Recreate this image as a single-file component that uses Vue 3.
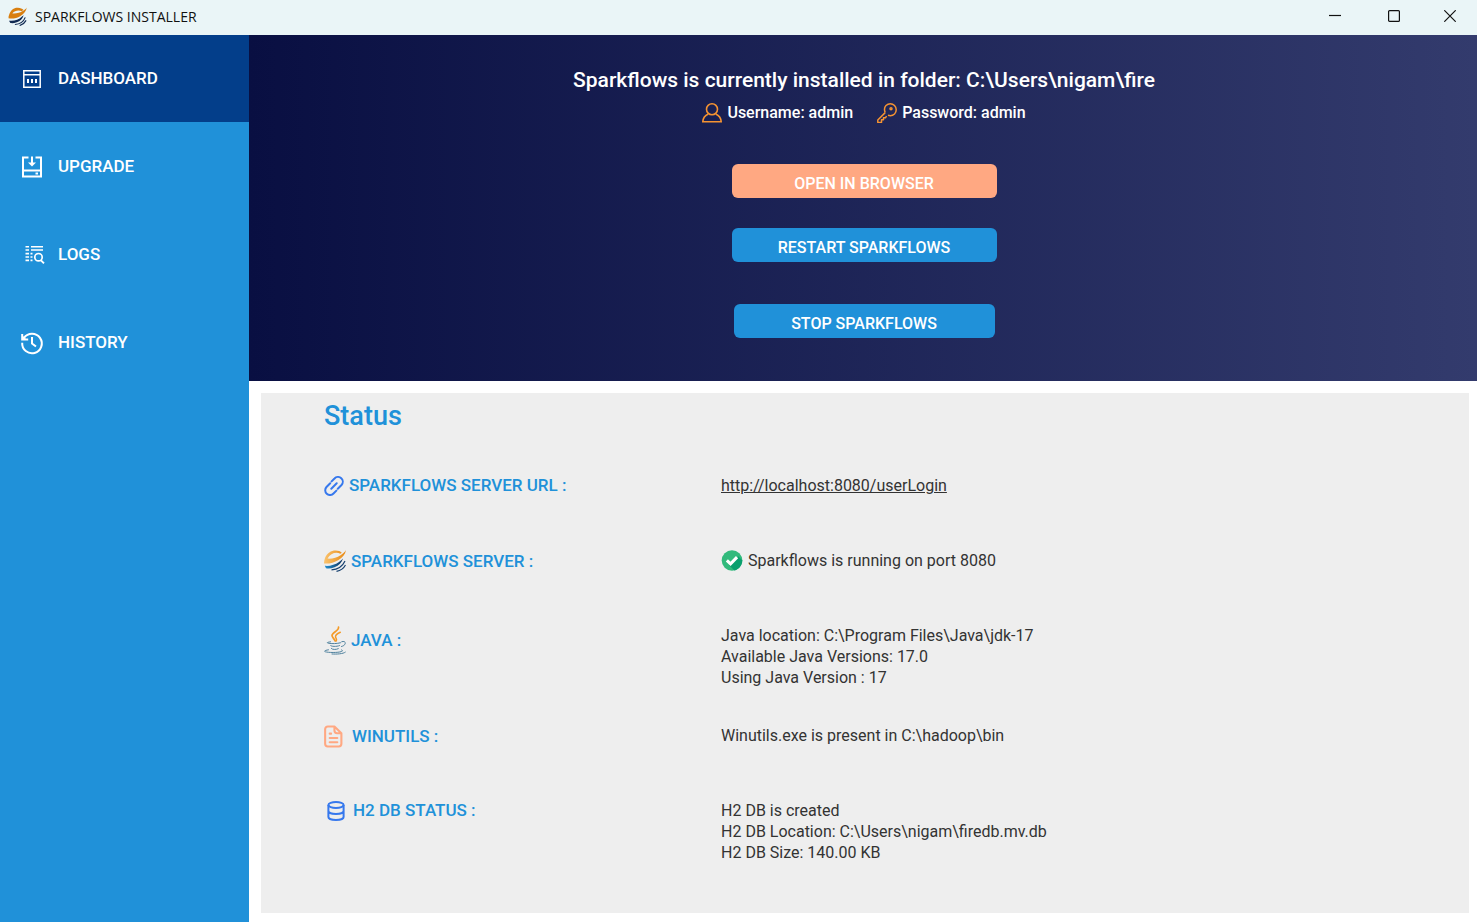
<script setup>
import { ref } from 'vue'

const active = ref('dashboard')
const menu = [
  { id: 'dashboard', label: 'DASHBOARD' },
  { id: 'upgrade', label: 'UPGRADE' },
  { id: 'logs', label: 'LOGS' },
  { id: 'history', label: 'HISTORY' },
]
const java = ['Java location: C:\\Program Files\\Java\\jdk-17', 'Available Java Versions: 17.0', 'Using Java Version : 17']
const db = ['H2 DB is created', 'H2 DB Location: C:\\Users\\nigam\\firedb.mv.db', 'H2 DB Size: 140.00 KB']
</script>

<template>
  <div class="window">
    <header class="titlebar">
      <svg class="app-logo" viewBox="0 0 22 22" aria-hidden="true">
        <path d="M1.500 8.500C3 3.500 7 .5 11.500.8c3 .1 5 1.200 6.300 2.500L16 5C13 3.400 8 3.600 5 7.400c4 .5 9-.7 12.500-3.100C19.500 3.400 20.800 2 21.800.5 21 4.500 18.500 8 14.500 10.300 10 13 5 13.800.6 12.900c-.2-1.400.2-3 .9-4.400z" fill="#d97f10" />
        <path d="M1.200 15.800c5.500.8 11-.8 15-4.800l2-1.500c-1.500 4-4 6.800-8 8.200-3 1-5.500 1.200-7.500.8z" fill="#102a52" />
        <path d="M8 20.300c5-.3 10-3.200 12-8.300M13.500 21.500c3.500-1 6-3.200 7.500-6" fill="none" stroke="#102a52" stroke-width="1.300" />
      </svg>
      <span class="app-name">SPARKFLOWS INSTALLER</span>
      <div class="controls">
        <button type="button" aria-label="Minimize"><svg viewBox="0 0 12 12"><path d="M0 5.500h12" /></svg></button>
        <button type="button" aria-label="Maximize"><svg viewBox="0 0 12 12"><rect x=".6" y=".6" width="10.800" height="10.800" rx="1" /></svg></button>
        <button type="button" aria-label="Close"><svg viewBox="0 0 12 12"><path d="M.3.3l11.400 11.400M11.700.3L.3 11.700" /></svg></button>
      </div>
    </header>

    <div class="body">
      <nav class="sidebar">
        <button
          v-for="item in menu"
          :key="item.id"
          type="button"
          class="nav-item"
          :class="{ active: active === item.id }"
          @click="active = item.id"
        >
          <svg class="nav-icon" viewBox="0 0 22 22" aria-hidden="true">
            <g v-if="item.id === 'dashboard'" fill="none" stroke="#fff" stroke-width="1.500">
              <path d="M2.800 2.800h16.400v16.400H2.800zM2.800 6.800h16.400" />
              <path d="M7 11v4M11 11v4M15 11v4" stroke-width="2" />
            </g>
            <g v-else-if="item.id === 'upgrade'" fill="none" stroke="#fff" stroke-width="2">
              <path d="M7.500 1.500H2v19h18v-19h-5.500M2 14.500h18M11 .5v8" />
              <path d="M7 6.500h8L11 10.500zM14.500 16.500h2.500v2h-2.500z" fill="#fff" stroke="none" />
            </g>
            <g v-else-if="item.id === 'logs'" fill="none" stroke="#fff">
              <path d="M4.500 2.800H8M4.500 6H8M4.500 9.600H8M4.500 13H8M4.500 16.400H8M10 2.800h12M10 6h12" stroke-width="1.600" />
              <path d="M9.500 9.600h2M9.500 13h2M9.500 16.400h2" stroke-width="1.600" />
              <circle cx="17.500" cy="13.200" r="3.700" stroke-width="1.700" />
              <path d="M20 16.300l3 3" stroke-width="1.900" />
            </g>
            <g v-else fill="none" stroke="#fff" stroke-width="2">
              <path d="M1.200 10.800A9.800 9.800 0 1 0 3 5.800M11 5v6.500l4 3" />
              <path d="M1.200 2v5.500h6" />
              <path d="M1 3v5h5z" fill="#fff" stroke="none" />
            </g>
          </svg>
          <span>{{ item.label }}</span>
        </button>
      </nav>

      <main class="main">
        <section class="hero">
          <h1>Sparkflows is currently installed in folder: C:\Users\nigam\fire</h1>
          <div class="credentials">
            <span class="credential">
              <svg viewBox="0 0 20 20" aria-hidden="true"><g fill="none" stroke="#f59332" stroke-width="1.600"><circle cx="10" cy="6.300" r="5.500" /><path d="M6.300 11C3 12.500 1 15.500.8 18.700h18.400C19 15.500 17 12.500 13.700 11" /></g></svg>
              Username: admin
            </span>
            <span class="credential">
              <svg viewBox="0 0 20 20" aria-hidden="true"><g fill="none" stroke="#f59332" stroke-width="1.500" stroke-linejoin="round"><path d="M8.200 9.600L.8 17v2.400h3.700v-2.600h2v-2h2l1-1.800M8.200 9.600C7 6.500 7.300 4.200 9 2.500c2.500-2.300 6.200-2.300 8.500 0s2.300 6 0 8.500c-1.800 1.700-4.300 2-6.500 1.300" /><circle cx="14" cy="5.700" r="1" /></g></svg>
              Password: admin
            </span>
          </div>
          <div class="actions">
            <button type="button" class="action open">OPEN IN BROWSER</button>
            <button type="button" class="action restart">RESTART SPARKFLOWS</button>
            <button type="button" class="action stop">STOP SPARKFLOWS</button>
          </div>
        </section>

        <section class="status">
          <h2>Status</h2>
          <dl class="rows">
            <div class="row">
              <dt>
                <svg class="link-icon" viewBox="0 0 20 20" aria-hidden="true"><path d="M7.600 5.400l2.900-2.900a4.600 4.600 0 0 1 7 6.500l-3.700 3.700M12.400 14.600l-2.900 2.900a4.600 4.600 0 0 1-7-6.500l3.700-3.700M7.300 12.700l5.400-5.400" fill="none" stroke="#3678ed" stroke-width="2" stroke-linecap="round" /></svg>
                SPARKFLOWS SERVER URL :
              </dt>
              <dd><a href="http://localhost:8080/userLogin">http://localhost:8080/userLogin</a></dd>
            </div>
            <div class="row">
              <dt>
                <svg class="brand-icon" viewBox="0 0 22 22" aria-hidden="true">
                  <defs>
                    <linearGradient id="spark-orange"><stop offset="0" stop-color="#fac36e" /><stop offset="1" stop-color="#e88913" /></linearGradient>
                    <linearGradient id="spark-blue"><stop offset="0" stop-color="#218fd0" /><stop offset="1" stop-color="#12345e" /></linearGradient>
                  </defs>
                  <path d="M1 8C3 3 7 .5 11.500.5c3 0 4.800.9 6.300 2.200l-1.500 1C12.500 1.400 6.500 2.800 3.500 8.600c5 .3 9.500-1 13-3.400C19 3.900 20.800 2 22 0c-.8 4.500-3.500 7.700-7.500 9.900C10 12.600 5 14 0 13.500 0 11.500.300 9.700 1 8z" fill="url(#spark-orange)" />
                  <path d="M.8 15.800C6 16.300 11 14.800 15 12c1.600-1 3-2.200 4-3.500-1.200 4-4 7-8.500 8.800-3 1.200-6 1.600-8.500 1z" fill="url(#spark-blue)" />
                  <path d="M7.500 19.800c6-.3 11-3.300 13.500-8.800M12.500 21.300c4-.8 7.300-3 9-6.300" fill="none" stroke="#16406f" stroke-width="1.200" />
                </svg>
                SPARKFLOWS SERVER :
              </dt>
              <dd class="running">
                <svg viewBox="0 0 22 22" aria-hidden="true"><circle cx="11" cy="11" r="10.800" fill="#32ba7c" /><path d="M8 16l5.500 5.500c5-1.300 8.300-5.700 8.300-10.500v-.3L17.500 6.500z" fill="#0aa06e" /><path d="M5.600 10.800l3.900 3.700 6.800-7" fill="none" stroke="#fff" stroke-width="3.200" /></svg>
                Sparkflows is running on port 8080
              </dd>
            </div>
            <div class="row">
              <dt>
                <svg class="java-icon" viewBox="0 0 22 30" aria-hidden="true">
                  <g fill="none" stroke-linecap="round" transform="translate(0 1.500)">
                    <path d="M14.500.5c1 3.500-6.500 5.500-6.500 8.600 0 2 2.500 3.400 3.200 5.400" stroke="#f49a27" stroke-width="1.700" />
                    <path d="M16.300 5.800c-3 1.300-5 2.800-4.800 4.600.1 1.300 1.700 2.200.8 4" stroke="#f49a27" stroke-width="1.500" />
                    <path d="M6.500 15.300c-3 .4-4.200 1-2.300 1.400 3.500.7 8.800.5 12.300-.4M6.500 19c.5 1.200 6 1.300 9 .1M7.300 22c.8 1.300 4.800 1.300 7 .2M17.700 15.200c2.200-.8 4 .1 3.500 1.900-.4 1.500-2 2.500-3.700 2.900M4.500 23.300c-4 .5-5.200 1.700-2.200 2.200 5 .9 14.500.5 16-.9.500-.5-.2-.9-.8-1.200M8 27.500c5 .3 11-.1 13.300-1.800" stroke="#50829e" stroke-width="1" />
                  </g>
                </svg>
                JAVA :
              </dt>
              <dd><div v-for="line in java" :key="line">{{ line }}</div></dd>
            </div>
            <div class="row">
              <dt>
                <svg class="file-icon" viewBox="0 0 20 24" aria-hidden="true"><g fill="none" stroke="#ffa882" stroke-width="2.200" stroke-linecap="round" stroke-linejoin="round"><path d="M11 1.500H4A2.800 2.800 0 0 0 1.200 4.300v15.400A2.800 2.800 0 0 0 4 22.500h11.500a2.800 2.800 0 0 0 2.800-2.800V8.500zM11 1.500v4.200a2.800 2.800 0 0 0 2.800 2.800h4.500M6 9h1.500M6 13.500h8M6 18h8" /></g></svg>
                WINUTILS :
              </dt>
              <dd>Winutils.exe is present in C:\hadoop\bin</dd>
            </div>
            <div class="row">
              <dt>
                <svg class="db-icon" viewBox="0 0 18 20" aria-hidden="true"><g fill="none" stroke="#3678ed" stroke-width="2"><ellipse cx="9" cy="4" rx="7.600" ry="3" /><path d="M1.400 4v12c0 1.700 3.400 3 7.600 3s7.600-1.300 7.600-3V4M1.400 10c0 1.700 3.400 3 7.600 3s7.600-1.300 7.600-3" /></g></svg>
                H2 DB STATUS :
              </dt>
              <dd><div v-for="line in db" :key="line">{{ line }}</div></dd>
            </div>
          </dl>
        </section>
      </main>
    </div>
  </div>
</template>

<style>
body {
  margin: 0;
}
</style>

<style scoped>
.window {
  display: flex;
  flex-direction: column;
  min-height: 100vh;
  background: #fff;
  font-family: Roboto, "Liberation Sans", sans-serif;
  font-size: 16px;
  line-height: 21px;
  color: #333;
}
button {
  border: 0;
  padding: 0;
  font: inherit;
  color: inherit;
  background: none;
  cursor: pointer;
}
svg {
  display: block;
  flex: none;
}
.titlebar {
  display: flex;
  align-items: center;
  box-sizing: border-box;
  height: 35px;
  padding: 0 0 3px 8px;
  background: #eaf5f7;
  color: #111;
}
.app-logo {
  width: 19px;
  height: 19px;
}
.app-name {
  margin-left: 8px;
  font-family: "Open Sans", "Noto Sans", sans-serif;
  font-size: 14px;
}
.controls {
  display: flex;
  margin-left: auto;
}
.controls button {
  display: grid;
  place-items: center;
  width: 59px;
  height: 32px;
}
.controls button:last-child {
  width: 54px;
}
.controls svg {
  width: 12px;
  height: 12px;
  fill: none;
  stroke: #111;
  stroke-width: 1.2;
}
.body {
  display: flex;
  flex: 1;
}
.sidebar {
  display: flex;
  flex-direction: column;
  gap: 1px;
  flex: none;
  width: 249px;
  background: #2091d9;
}
.nav-item {
  display: flex;
  align-items: center;
  gap: 15px;
  width: 100%;
  height: 87px;
  padding-left: 21px;
  color: #fff;
  font-weight: 500;
  font-size: 17px;
}
.nav-item.active {
  background: #033e8a;
}
.nav-icon {
  width: 22px;
  height: 22px;
  overflow: visible;
}
.main {
  display: flex;
  flex-direction: column;
  flex: 1;
  min-width: 0;
}
.hero {
  display: flex;
  flex-direction: column;
  align-items: center;
  padding: 32px 0 43px 2px;
  background: linear-gradient(90deg, #090f42, #333b6d);
  color: #fff;
}
h1 {
  margin: 0;
  font-size: 21px;
  line-height: 26px;
  font-weight: 500;
}
.credentials {
  display: flex;
  gap: 24px;
  margin-top: 9px;
}
.credential {
  display: flex;
  align-items: center;
  gap: 5px;
  font-size: 16px;
  font-weight: 500;
}
.credential svg {
  width: 20px;
  height: 20px;
}
.actions {
  display: flex;
  flex-direction: column;
  align-items: center;
  margin-top: 41px;
}
.action {
  width: 265px;
  height: 34px;
  padding-top: 4px;
  border-radius: 6px;
  background: #2091d9;
  font-size: 16px;
  font-weight: 500;
}
.open {
  background: #ffa882;
}
.restart {
  margin-top: 30px;
}
.stop {
  width: 261px;
  margin-top: 42px;
}
.status {
  flex: 1;
  margin: 12px 8px 9px 12px;
  padding: 6px 24px 12px 63px;
  background: #eee;
}
h2 {
  margin: 0 0 42px;
  font-size: 27px;
  line-height: 34px;
  font-weight: 500;
  color: #2091d9;
}
.rows {
  display: grid;
  gap: 37px;
  margin: 0;
}
.row {
  display: grid;
  grid-template-columns: 397px minmax(0, 1fr);
  align-items: start;
  min-height: 38px;
}
dt {
  display: flex;
  align-items: center;
  gap: 5px;
  color: #2091d9;
  font-size: 17px;
  font-weight: 500;
}
dd {
  margin: 0;
}
dd a {
  color: inherit;
}
.running {
  display: flex;
  align-items: center;
  gap: 5px;
}
.running svg {
  width: 22px;
  height: 21px;
}
.brand-icon {
  width: 22px;
  height: 22px;
}
.link-icon {
  width: 20px;
  height: 20px;
}
.java-icon {
  width: 22px;
  height: 30px;
}
.file-icon {
  width: 19px;
  height: 23px;
  margin-right: 4px;
}
.db-icon {
  width: 18px;
  height: 20px;
  margin: 0 3px;
}
</style>
